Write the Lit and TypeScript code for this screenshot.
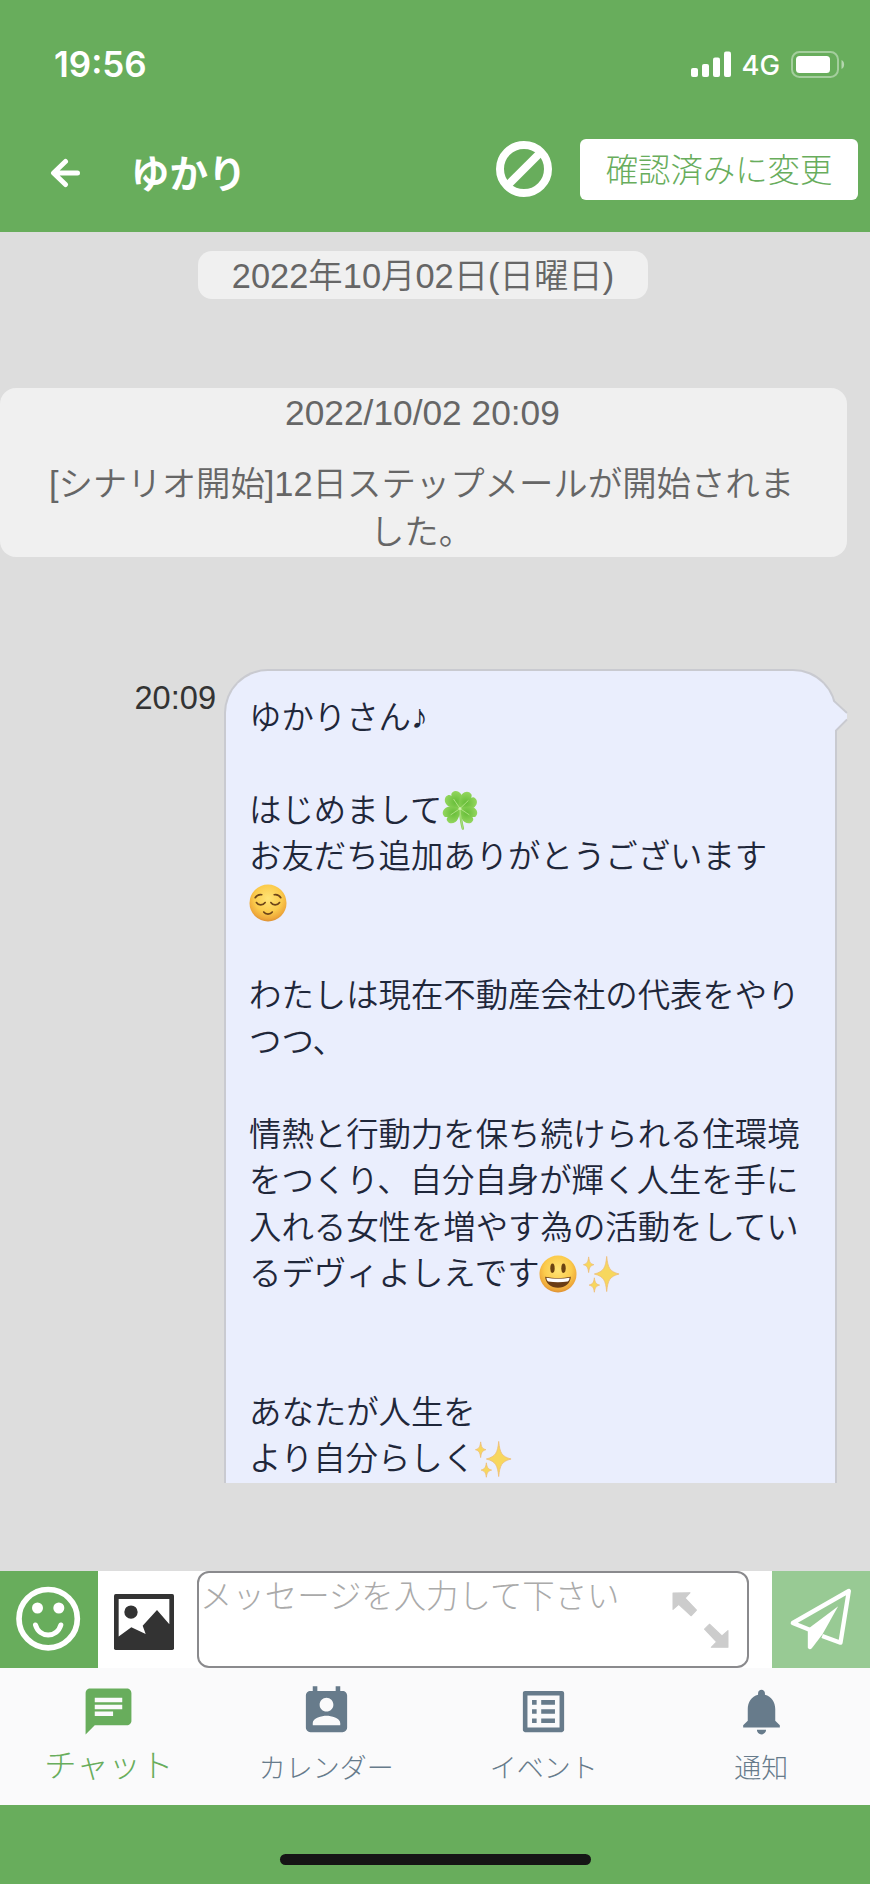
import { LitElement, html, svg, css, type TemplateResult } from "lit";
import { customElement, property } from "lit/decorators.js";

type EmojiName = "clover" | "relieved" | "grin" | "sparkles";
type Part = string | { emoji: EmojiName } | { note: string };

const MESSAGE: Part[][] = [
  ["ゆかりさん", { note: "♪" }],
  [],
  ["はじめまして", { emoji: "clover" }],
  ["お友だち追加ありがとうございます"],
  [{ emoji: "relieved" }],
  [],
  ["わたしは現在不動産会社の代表をやり"],
  ["つつ、"],
  [],
  ["情熱と行動力を保ち続けられる住環境"],
  ["をつくり、自分自身が輝く人生を手に"],
  ["入れる女性を増やす為の活動をしてい"],
  ["るデヴィよしえです", { emoji: "grin" }, { emoji: "sparkles" }],
  [],
  [],
  ["あなたが人生を"],
  ["より自分らしく", { emoji: "sparkles" }],
];

const faceDefs = svg`
  <defs>
    <radialGradient id="face" cx="50%" cy="38%" r="62%">
      <stop offset="0" stop-color="#ffe476"></stop>
      <stop offset="0.6" stop-color="#fbcb4c"></stop>
      <stop offset="0.88" stop-color="#eea83a"></stop>
      <stop offset="1" stop-color="#dd9034"></stop>
    </radialGradient>
  </defs>
  <circle cx="20" cy="20" r="19.500" fill="url(#face)"></circle>`;

const leaf = svg`<path d="M0 0C-3-2-9-6-9-11c0-4 3-6.500 6-6 1.500 0 2.500 1 3 2.500C.5-16 1.500-17 3-17c3-.5 6 2 6 6C9-6 3-2 0 0z" fill="url(#leaf)"></path><path d="M0 0V-11" stroke="#b5e58a" stroke-width=".8"></path>`;

const EMOJI: Record<EmojiName, TemplateResult> = {
  clover: html`<svg viewBox="0 0 40 40">
    <defs>
      <radialGradient id="leaf" cx="50%" cy="55%" r="60%">
        <stop offset="0" stop-color="#66bd38"></stop>
        <stop offset="1" stop-color="#93d65e"></stop>
      </radialGradient>
    </defs>
    <path d="M20 19c.5 8 1 13 3 20.500" fill="none" stroke="#86cb58" stroke-width="2.600" stroke-linecap="round"></path>
    <g transform="translate(20 18.500)">
      <g transform="rotate(-34) scale(1.050 1.100)">${leaf}</g>
      <g transform="rotate(46) scale(1.050 1.120)">${leaf}</g>
      <g transform="rotate(124) scale(1 1.080)">${leaf}</g>
      <g transform="rotate(236) scale(1 1.080)">${leaf}</g>
    </g>
    <path d="M20 19c.5 8 1 13 3 20.500" fill="none" stroke="#a5dc78" stroke-width="1.400" stroke-linecap="round"></path>
    <circle cx="20" cy="18.500" r="1.500" fill="#d3f0b0"></circle>
  </svg>`,
  relieved: html`<svg viewBox="0 0 40 40">
    ${faceDefs}
    <g fill="none" stroke="#6d4519" stroke-width="1.700" stroke-linecap="round">
      <path d="M6.500 14.500c1.500-2.500 4-3.700 7-3.200"></path>
      <path d="M33.500 14.500c-1.500-2.500-4-3.700-7-3.200"></path>
      <path d="M7.800 19.500c2 3.300 7 3.300 9.200 0"></path>
      <path d="M23 19.500c2 3.300 7 3.300 9.200 0"></path>
      <path d="M15.500 29.500c2 3 7 3 9 0"></path>
    </g>
  </svg>`,
  grin: html`<svg viewBox="0 0 40 40">
    ${faceDefs}
    <ellipse cx="14.200" cy="14" rx="2.300" ry="5" fill="#6b4212"></ellipse>
    <ellipse cx="25.800" cy="14" rx="2.300" ry="5" fill="#6b4212"></ellipse>
    <path d="M6.500 23c9 1.800 18 1.800 27 0-.5 7-6 11.500-13.500 11.500S7 30 6.500 23z" fill="#6b3d14"></path>
    <path d="M7.800 24c8 1.500 16.400 1.500 24.400 0-.2 2.200-1 3.500-2 4-6.500 1-14 1-20.400 0-1-.5-1.800-1.800-2-4z" fill="#fff"></path>
  </svg>`,
  sparkles: html`<svg viewBox="0 0 40 40">
    <g fill="#f7d75e" stroke="#eebc74" stroke-width=".8">
      <path d="M26 1.500c1.300 12 3 15.800 13 18.500-10 2.700-11.700 6.500-13 18.500-1.300-12-3-15.800-13-18.500 10-2.700 11.700-6.500 13-18.500z"></path>
      <path d="M7 2c.8 5.500 1.500 7 5.500 8.200C8.500 11.500 7.800 13 7 18.500 6.200 13 5.500 11.500 1.500 10.200 5.500 9 6.200 7.500 7 2z"></path>
      <path d="M13 24c.8 5 1.500 6.500 5.500 7.700-4 1.200-4.700 2.700-5.500 7.500-.8-4.800-1.500-6.300-5.500-7.500 4-1.200 4.700-2.700 5.500-7.700z"></path>
    </g>
  </svg>`,
};

const TABS = [
  {
    label: "チャット",
    active: true,
    path: "M20 2H4c-1.100 0-1.990.9-1.990 2L2 22l4-4h14c1.100 0 2-.9 2-2V4c0-1.100-.9-2-2-2zM6 9h12v2H6V9zm8 5H6v-2h8v2zm4-6H6V6h12v2z",
  },
  {
    label: "カレンダー",
    active: false,
    path: "M19 3h-1V1h-2v2H8V1H6v2H5c-1.110 0-2 .9-2 2v14c0 1.100.89 2 2 2h14c1.100 0 2-.9 2-2V5c0-1.100-.9-2-2-2zm-7 3c1.660 0 3 1.340 3 3s-1.340 3-3 3-3-1.340-3-3 1.340-3 3-3zm6 12H6v-1c0-2 4-3.100 6-3.100s6 1.100 6 3.100v1z",
  },
  {
    label: "イベント",
    active: false,
    path: "M19 5v14H5V5h14m1.100-2H3.900c-.5 0-.9.4-.9.9v16.200c0 .4.4.9.9.9h16.200c.4 0 .9-.5.9-.9V3.900c0-.5-.5-.9-.9-.9zM11 7h6v2h-6V7zm0 4h6v2h-6v-2zm0 4h6v2h-6zM7 7h2v2H7zm0 4h2v2H7zm0 4h2v2H7z",
  },
  {
    label: "通知",
    active: false,
    path: "M12 22c1.100 0 2-.9 2-2h-4c0 1.100.89 2 2 2zm6-6v-5c0-3.070-1.640-5.640-4.500-6.320V4c0-.83-.67-1.500-1.500-1.500s-1.500.67-1.500 1.500v.68C7.630 5.360 6 7.920 6 11v5l-2 2v1h16v-1l-2-2z",
  },
];

@customElement("status-bar")
class StatusBar extends LitElement {
  static styles = css`
    :host { display: flex; justify-content: space-between; align-items: center; height: 128px; padding: 0 25px 0 54px; box-sizing: border-box; color: #fff; font-family: Inter, sans-serif; }
    .time { font-size: 35px; font-weight: 600; line-height: 40px; }
    .right { display: flex; align-items: center; }
    .net { font-size: 27.500px; font-weight: 500; line-height: 32px; margin: 1px 11px 0 10px; }
    svg { display: block; }
  `;
  render() {
    return html`
      <span class="time">19:56</span>
      <div class="right">
        <svg width="40" height="26" viewBox="0 0 40 26" fill="#fff">
          <rect x="0" y="17" width="7" height="9" rx="2"></rect>
          <rect x="11" y="13" width="7" height="13" rx="2"></rect>
          <rect x="22" y="6.500" width="7" height="19.500" rx="2"></rect>
          <rect x="33" y="0.500" width="7" height="25.500" rx="2"></rect>
        </svg>
        <span class="net">4G</span>
        <svg width="54" height="27" viewBox="0 0 54 27">
          <rect x="1" y="1" width="46" height="25" rx="7.500" fill="none" stroke="#fff" stroke-opacity=".4" stroke-width="2"></rect>
          <rect x="5" y="5" width="34" height="17" rx="3.500" fill="#fff"></rect>
          <path d="M50.500 9c3.500 1.500 3.500 7.500 0 9z" fill="#fff" fill-opacity=".5"></path>
        </svg>
      </div>`;
  }
}

@customElement("chat-header")
class ChatHeader extends LitElement {
  @property() name = "";
  static styles = css`
    :host { display: flex; align-items: flex-start; height: 104px; padding: 11px 12px 0 49px; box-sizing: border-box; color: #fff; font-family: "Noto Sans CJK JP", sans-serif; }
    .back { margin-top: 19px; }
    .name { flex: 1; margin-left: 50px; font-size: 38.500px; font-weight: 700; line-height: 60px; padding-top: 2px; }
    .block { margin: 2px 28px 0 0; }
    .confirm { width: 278px; height: 61px; border-radius: 6px; background: #fff; color: #68ad5c; font-size: 32.400px; font-weight: 300; line-height: 58px; text-align: center; }
    svg { display: block; }
  `;
  render() {
    return html`
      <svg class="back" width="32" height="30" viewBox="0 0 32 30" fill="none" stroke="#fff" stroke-width="5" stroke-linecap="round" stroke-linejoin="round">
        <path d="M28.500 15H5M16.500 3.500L4.500 15 16.500 26.500"></path>
      </svg>
      <span class="name">${this.name}</span>
      <svg class="block" width="56" height="56" viewBox="0 0 56 56" fill="none" stroke="#fff" stroke-width="8">
        <circle cx="28" cy="28" r="24"></circle>
        <path d="M12 44L44 12"></path>
      </svg>
      <div class="confirm">確認済みに変更</div>`;
  }
}

@customElement("chat-log")
class ChatLog extends LitElement {
  static styles = css`
    :host { display: block; box-sizing: border-box; height: 1251px; padding-top: 19px; overflow: hidden; font-family: "Liberation Sans", "Noto Sans CJK JP", sans-serif; }
    .date { width: 450px; height: 48px; margin-left: 198px; border-radius: 14px; background: #f0f0f0; color: #666; font-size: 34.400px; font-weight: 350; line-height: 50px; text-align: center; }
    .notice { box-sizing: border-box; width: 847px; height: 169px; margin-top: 89px; padding-right: 4px; border-radius: 16px; background: #f0f0f0; color: #666; font-size: 34.400px; font-weight: 350; line-height: 48px; text-align: center; }
    .stamp { font-size: 35.300px; line-height: 48px; padding: 1px 0 0 2px; margin-bottom: 23px; }
    .row { display: flex; margin-top: 112px; }
    .time { width: 216px; margin-right: 8px; padding-top: 11px; color: #333; font-size: 32.600px; line-height: 36px; text-align: right; }
    .bubble { position: relative; box-sizing: border-box; width: 613px; height: 860px; padding: 22px 20px 0 23px; border: 2px solid #c9cad0; border-bottom: 0; border-radius: 44px 44px 0 0; background: #eaeefd; color: #1f273a; font-family: "Noto Sans CJK JP", sans-serif; font-size: 32.400px; font-weight: 350; }
    .line { display: flex; align-items: center; height: 46.330px; line-height: 46.330px; white-space: nowrap; }
    .text { padding-bottom: 2px; }
    .emoji { display: block; width: 38px; height: 38px; margin: 3px 5px 0 0; }
    .text + .emoji { margin-left: -1px; }
    .emoji svg { display: block; width: 38px; height: 38px; overflow: visible; }
    .note { font-family: "DejaVu Sans", sans-serif; font-size: 34px; line-height: 40px; }
    .tail { position: absolute; left: 606px; top: 28px; }
  `;
  private part(p: Part) {
    if (typeof p === "string") return html`<span class="text">${p}</span>`;
    if ("note" in p) return html`<span class="note">${p.note}</span>`;
    return html`<span class="emoji">${EMOJI[p.emoji]}</span>`;
  }
  render() {
    return html`
      <div class="date">2022年10月02日(日曜日)</div>
      <div class="notice">
        <div class="stamp">2022/10/02 20:09</div>
        <div>[シナリオ開始]12日ステップメールが開始されま<br />した。</div>
      </div>
      <div class="row">
        <div class="time">20:09</div>
        <div class="bubble">
          ${MESSAGE.map((l) => html`<div class="line">${l.map((p) => this.part(p))}</div>`)}
          <svg class="tail" width="16" height="36" viewBox="0 0 16 36">
            <path d="M0 2h2L15 14v6L4.500 31H0z" fill="#eaeefd"></path>
            <path d="M1.500 1.500L15 14M15 20.500L4 31.500" fill="none" stroke="#c9cad0" stroke-width="1.800"></path>
          </svg>
        </div>
      </div>`;
  }
}

@customElement("message-composer")
class MessageComposer extends LitElement {
  static styles = css`
    :host { display: flex; height: 97px; background: #fff; font-family: "Noto Sans CJK JP", sans-serif; }
    svg { display: block; }
    .face { width: 98px; background: #68ad5c; }
    .picture { width: 60px; height: 56px; margin: 23px 23px 0 16px; }
    .field { box-sizing: border-box; display: flex; justify-content: space-between; width: 552px; padding: 0 18px 0 1px; border: 2px solid #8a8a8d; border-radius: 12px; }
    .hint { color: #aaa; font-size: 32.400px; font-weight: 300; line-height: 42px; }
    .resize { margin-top: 19px; }
    .send { width: 98px; margin-left: auto; background: #98ca94; }
  `;
  render() {
    return html`
      <svg class="face" height="97" viewBox="0 0 293 291">
        <circle cx="144" cy="143" r="87.500" fill="none" stroke="#fff" stroke-width="17"></circle>
        <circle cx="112" cy="111" r="16.500" fill="#fff"></circle>
        <circle cx="176" cy="111" r="16.500" fill="#fff"></circle>
        <path d="M106 162C118 202 170 202 182 162" fill="none" stroke="#fff" stroke-width="15" stroke-linecap="round"></path>
      </svg>
      <svg class="picture" viewBox="0 0 180 167" preserveAspectRatio="none">
        <rect width="180" height="167" rx="5" fill="#333"></rect>
        <path d="M14 15H166V90L129 48 86 95 95 119 52 99 14 127z" fill="#fff"></path>
        <circle cx="51" cy="54" r="20" fill="#333"></circle>
      </svg>
      <div class="field">
        <span class="hint">メッセージを入力して下さい</span>
        <svg class="resize" width="57" height="56" viewBox="0 0 170 167" fill="#ccc" stroke="#ccc" stroke-width="3" stroke-linejoin="round">
          <path d="M3 3L54 2 39 18 73 54 57 71 20 37 3 52z"></path>
          <path d="M97 111L112 96 149 131 167 115V165H117L133 149z"></path>
        </svg>
      </div>
      <svg class="send" height="97" viewBox="0 0 293 291">
        <path d="M116 178L62 156 230 60 205 215 150 195" fill="none" stroke="#fff" stroke-width="13" stroke-linejoin="round"></path>
        <path d="M198 106L107 174V230Q112 238 119 232L151 190z" fill="#fff"></path>
      </svg>`;
  }
}

@customElement("tab-bar")
class TabBar extends LitElement {
  static styles = css`
    :host { display: grid; grid-template-columns: repeat(4, 1fr); height: 137px; background: #fafafb; font-family: "Noto Sans CJK JP", sans-serif; }
    .tab { display: flex; flex-direction: column; align-items: center; padding-top: 16px; color: #677b8b; }
    .tab svg { display: block; width: 55px; height: 55px; }
    .label { margin-top: 8px; font-size: 27px; font-weight: 300; line-height: 40px; }
    .active { color: #68ad5c; }
    .active .label { margin-top: 4px; font-size: 32.300px; }
  `;
  render() {
    return html`${TABS.map(
      (t) => html`<div class="tab ${t.active ? "active" : ""}">
        <svg viewBox="0 0 24 24" fill="currentColor"><path d=${t.path}></path></svg>
        <span class="label">${t.label}</span>
      </div>`
    )}`;
  }
}

@customElement("app-root")
class AppRoot extends LitElement {
  static styles = css`
    :host { display: flex; flex-direction: column; width: 870px; height: 1884px; overflow: hidden; background: #ddd; }
    .top { background: #68ad5c; }
    .spacer { flex: 1; }
    .home { display: flex; justify-content: center; height: 79px; background: #68ad5c; }
    .indicator { width: 311px; height: 11px; margin-top: 49px; border-radius: 6px; background: #151515; }
  `;
  render() {
    return html`
      <div class="top">
        <status-bar></status-bar>
        <chat-header name="ゆかり"></chat-header>
      </div>
      <chat-log></chat-log>
      <div class="spacer"></div>
      <message-composer></message-composer>
      <tab-bar></tab-bar>
      <div class="home"><div class="indicator"></div></div>`;
  }
}
